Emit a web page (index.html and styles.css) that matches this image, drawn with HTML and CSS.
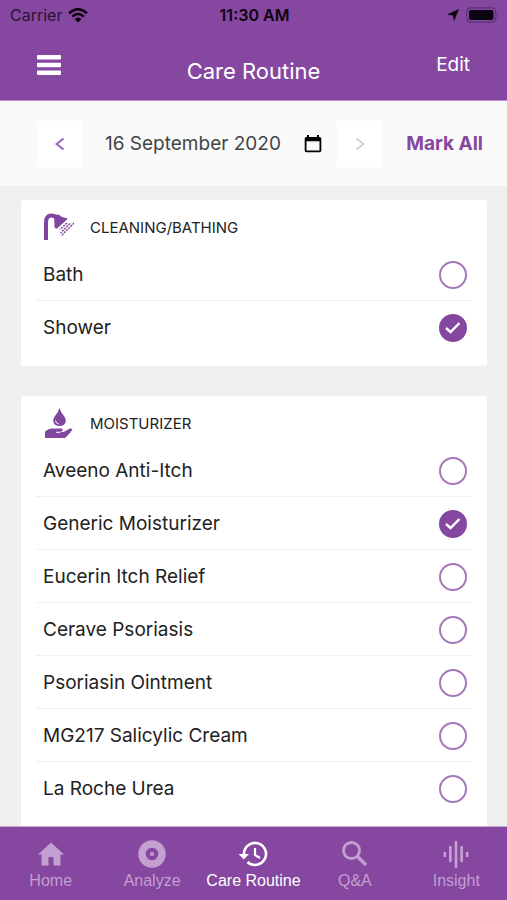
FILE: index.html
```html
<!DOCTYPE html>
<html lang="en">
<head>
<meta charset="utf-8">
<meta name="viewport" content="width=device-width, initial-scale=1">
<title>Care Routine</title>
<link rel="stylesheet" href="styles.css">
</head>
<body>
<header class="top">
  <div class="status">
    <span class="carrier">Carrier
      <svg width="20" height="15" viewBox="0 0 20 15" fill="none" stroke="currentColor" stroke-width="2.6"><path d="M1 5.2Q10-2.8 19 5.2M4.2 8.6Q10 3.4 15.8 8.6"/><path d="M6.6 11Q10 8 13.4 11L10 14.6Z" fill="currentColor" stroke="none"/></svg>
    </span>
    <time class="clock">11:30 AM</time>
    <span class="power">
      <svg width="14" height="14" viewBox="0 0 14 14"><path d="M13 1 8 13.2 7 7.4 1 6.4Z" fill="currentColor"/></svg>
      <svg width="33" height="16" viewBox="0 0 33 16"><rect x=".8" y=".8" width="29" height="14.4" rx="4" fill="none" stroke="#5d3275" stroke-width="1.2"/><rect x="3" y="3" width="24.500" height="10" rx="2" fill="currentColor"/><path d="M31.500 5.500q1.500 2.500 0 5z" fill="#5d3275"/></svg>
    </span>
  </div>
  <div class="nav">
    <button class="menu" aria-label="Menu"><svg width="24" height="20" viewBox="0 0 24 20" fill="#fff"><rect width="24" height="4.500" rx="1"/><rect y="7.700" width="24" height="4.500" rx="1"/><rect y="15.400" width="24" height="4.500" rx="1"/></svg></button>
    <h1>Care Routine</h1>
    <button class="edit">Edit</button>
  </div>
</header>
<section class="datebar" aria-label="Date">
  <button class="step" aria-label="Previous day"><svg width="10" height="14" viewBox="0 0 10 14"><path d="M8.500 1.500 1.500 7l7 5.500"/></svg></button>
  <input class="date" type="text" aria-label="Selected date" value="16 September 2020" readonly>
  <button class="calendar" aria-label="Open calendar"><svg width="18" height="18" viewBox="0 0 18 18"><path fill-rule="evenodd" d="M3 0h2v2h8V0h2v2h.5A1.800 1.800 0 0 1 17.300 3.800v11.700a1.800 1.800 0 0 1-1.800 1.800h-13A1.800 1.800 0 0 1 .7 15.500V3.800A1.800 1.800 0 0 1 2.500 2H3ZM2.500 6.300v9.200h13V6.300Z"/></svg></button>
  <button class="step" aria-label="Next day" disabled><svg width="10" height="14" viewBox="0 0 10 14"><path d="M1.500 1.500 8.500 7l-7 5.500"/></svg></button>
  <button class="mark">Mark All</button>
</section>
<main>
  <section class="card">
    <h2><svg width="32" height="28" viewBox="0 0 32 28"><path d="M4 27V9.500Q4 2.500 9.500 2.500Q13 2.500 14.500 5" fill="none" stroke="#8346a0" stroke-width="4"/><path d="M12 4Q14 .5 17.500 2Q19.500 4.500 25 5Q25.500 6 24.500 7L15 15.500Q13 16 12.500 14Q12.500 8 12 4Z" fill="#8346a0"/><path d="m25 10-7 6.500M28 10.500 18.500 20M32 10 19 23" fill="none" stroke="#8346a0" stroke-width="1.500" stroke-dasharray="2 1"/></svg>CLEANING/BATHING</h2>
    <ul>
      <li><label for="c1">Bath</label><span class="tick"><input type="checkbox" id="c1"><svg viewBox="0 0 28 28"><path d="m7 14 4.500 4L20.500 9"/></svg></span></li>
      <li><label for="c2">Shower</label><span class="tick"><input type="checkbox" id="c2" checked><svg viewBox="0 0 28 28"><path d="m7 14 4.500 4L20.500 9"/></svg></span></li>
    </ul>
  </section>
  <section class="card">
    <h2><svg width="32" height="32" viewBox="0 0 32 32"><path fill="#8346a0" d="M17.500 1Q18.500 5 22 9Q24.500 12.500 23.500 15.500Q22 19 17.500 19Q13 19 11.500 15.500Q10.500 12.500 13 9Q16.500 5 17.500 1ZM3 24.500Q6.500 21.500 10 21.500H19Q21.500 22 20.500 24Q19.500 25 16 25H21Q23.500 24.500 25 23L28 21.500Q29.500 21 30.500 22.500Q27.500 27 23 31H3Z"/><path d="M13.500 13.500q.3 3 3.300 3.500M14 25.300h4.500" stroke="#fff" stroke-width="1" fill="none"/></svg>MOISTURIZER</h2>
    <ul>
      <li><label for="m1">Aveeno Anti-Itch</label><span class="tick"><input type="checkbox" id="m1"><svg viewBox="0 0 28 28"><path d="m7 14 4.500 4L20.500 9"/></svg></span></li>
      <li><label for="m2">Generic Moisturizer</label><span class="tick"><input type="checkbox" id="m2" checked><svg viewBox="0 0 28 28"><path d="m7 14 4.500 4L20.500 9"/></svg></span></li>
      <li><label for="m3">Eucerin Itch Relief</label><span class="tick"><input type="checkbox" id="m3"><svg viewBox="0 0 28 28"><path d="m7 14 4.500 4L20.500 9"/></svg></span></li>
      <li><label for="m4">Cerave Psoriasis</label><span class="tick"><input type="checkbox" id="m4"><svg viewBox="0 0 28 28"><path d="m7 14 4.500 4L20.500 9"/></svg></span></li>
      <li><label for="m5">Psoriasin Ointment</label><span class="tick"><input type="checkbox" id="m5"><svg viewBox="0 0 28 28"><path d="m7 14 4.500 4L20.500 9"/></svg></span></li>
      <li><label for="m6">MG217 Salicylic Cream</label><span class="tick"><input type="checkbox" id="m6"><svg viewBox="0 0 28 28"><path d="m7 14 4.500 4L20.500 9"/></svg></span></li>
      <li><label for="m7">La Roche Urea</label><span class="tick"><input type="checkbox" id="m7"><svg viewBox="0 0 28 28"><path d="m7 14 4.500 4L20.500 9"/></svg></span></li>
    </ul>
  </section>
</main>
<nav class="tabs" aria-label="Main">
  <a href="#home"><svg width="28" height="28" viewBox="0 0 28 28"><path fill="currentColor" d="M14 2.500 27 14.500H23.500V25.500H16.500V17H11.500V25.500H4.500V14.500H1Z"/></svg>Home</a>
  <a href="#analyze"><svg width="28" height="28" viewBox="0 0 28 28"><circle cx="14" cy="14" r="10" fill="none" stroke="currentColor" stroke-width="7.500"/><circle cx="14" cy="14" r="2" fill="currentColor"/></svg>Analyze</a>
  <a href="#routine" class="active" aria-current="page"><svg width="30" height="28" viewBox="0 0 30 28" fill="none" stroke="currentColor" stroke-width="2.600"><path d="M6 15V14A11 11 0 1 1 9.500 22"/><path d="M.5 14H11L5.800 19.500Z" fill="currentColor" stroke="none"/><path d="M17 8v7l5 3" stroke-width="2.200"/></svg>Care Routine</a>
  <a href="#qa"><svg width="28" height="28" viewBox="0 0 28 28" fill="none" stroke="currentColor" stroke-width="2.800"><circle cx="10.500" cy="10.500" r="8"/><path d="m16 16 9 9" stroke-width="3.600"/></svg>Q&amp;A</a>
  <a href="#insight"><svg width="28" height="28" viewBox="0 0 28 28" fill="none" stroke="currentColor" stroke-width="2.700" stroke-linecap="round"><path d="M2.800 13v3M8.400 7v14M14 2v25M19.600 7v14M25.200 13v3"/></svg>Insight</a>
</nav>
</body>
</html>
```
FILE: styles.css
```css
* { box-sizing: border-box; }

body {
  margin: 0;
  height: 100vh;
  display: flex;
  flex-direction: column;
  background: #f0f0f0;
  color: #222;
  font-family: Inter, "Liberation Sans", sans-serif;
  font-size: 19px;
}

button, input { font: inherit; border: 0; padding: 0; margin: 0; background: none; }
h1, h2, ul { margin: 0; padding: 0; font-weight: 400; }
svg { display: block; flex: none; }

.top {
  flex: none;
  background: #8547a0;
  color: #fff;
  border-bottom: 1px solid #b98bcc;
}

.status {
  display: grid;
  grid-template-columns: 1fr auto 1fr;
  align-items: center;
  height: 30px;
  padding: 0 8px 0 10px;
  font-size: 16px;
  color: #0b0310;
}
.carrier, .power { display: flex; align-items: center; gap: 6px; }
.carrier { color: #2a1335; }
.carrier svg { color: #0b0310; }
.power { justify-content: flex-end; }
.clock { font-weight: 600; }

.nav {
  display: grid;
  grid-template-columns: 1fr auto 1fr;
  align-items: start;
  height: 70px;
  padding: 25px 37px 0;
}
.menu { justify-self: start; }
.nav h1 { font-size: 22px; line-height: 32px; }
.edit { justify-self: end; color: #fff; line-height: 20px; }

.datebar {
  flex: none;
  display: flex;
  align-items: center;
  height: 85px;
  padding: 0 24px 0 37px;
  background: #fafafa;
}
.step {
  flex: none;
  display: grid;
  place-items: center;
  width: 45px;
  height: 46px;
  background: #fff;
}
.step svg { fill: none; stroke: #9a5fb5; stroke-width: 2; }
.step:disabled svg { stroke: #d0d0d0; }
.date { flex: 1; min-width: 0; margin-left: 23px; color: #444; }
.calendar { margin: 0 15px; }
.mark { flex: none; margin-left: 24px; color: #8547a0; font-weight: 700; }

main { flex: 1; min-height: 0; overflow: hidden; padding: 14px 20px 0 21px; }

.card {
  margin-bottom: 30px;
  padding: 0 15px 12px;
  background: #fff;
  border-radius: 3px;
}
.card h2 {
  display: flex;
  align-items: center;
  gap: 16px;
  height: 48px;
  padding: 6px 6px 0;
  font-size: 15px;
}
.card ul { list-style: none; }
.card li {
  display: flex;
  align-items: center;
  justify-content: space-between;
  height: 53px;
  padding: 0 5px 0 7px;
  border-bottom: 1px solid #f0f0f0;
}
.card li:last-child { border-bottom-color: transparent; }

.tick { display: grid; width: 28px; height: 28px; margin-top: 2px; }
.tick input, .tick svg { grid-area: 1 / 1; }
.tick input {
  appearance: none;
  width: 28px;
  height: 28px;
  border: 2px solid #a478ba;
  border-radius: 50%;
}
.tick input:checked { background: #8547a0; border-color: #8547a0; }
.tick svg { visibility: hidden; fill: none; stroke: #fff; stroke-width: 2.400; pointer-events: none; }
.tick input:checked + svg { visibility: visible; }

.tabs {
  flex: none;
  display: grid;
  grid-template-columns: repeat(5, 1fr);
  height: 74px;
  padding-top: 13px;
  border-top: 1px solid #c9a9d6;
  background: #8547a0;
  font: 16px/26px "Liberation Sans", sans-serif;
}
.tabs a {
  display: flex;
  flex-direction: column;
  align-items: center;
  color: #c39fd2;
  text-decoration: none;
  white-space: nowrap;
}
.tabs .active { color: #fff; }
```
